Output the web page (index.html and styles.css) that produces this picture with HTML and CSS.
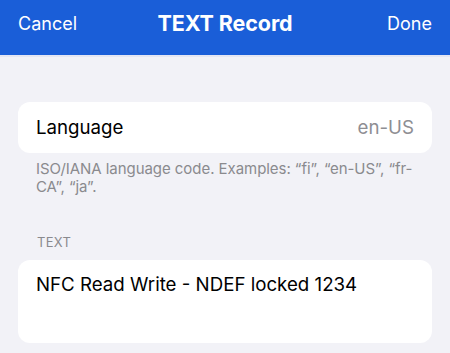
FILE: index.html
```html
<!DOCTYPE html>
<html>
<head>
<meta charset="utf-8">
<link rel="stylesheet" href="styles.css">
</head>
<body>
<div class="app">
  <header class="navbar">
    <span class="nav-btn left">Cancel</span>
    <span class="nav-title">TEXT Record</span>
    <span class="nav-btn right">Done</span>
  </header>
  <main class="content">
    <section class="group first">
      <div class="card row">
        <span class="label">Language</span>
        <span class="value">en-US</span>
      </div>
      <p class="footer">ISO/IANA language code. Examples: “fi”, “en-US”, “fr-CA”, “ja”.</p>
    </section>
    <section class="group">
      <div class="header">TEXT</div>
      <div class="card textarea">NFC Read Write - NDEF locked 1234</div>
    </section>
  </main>
</div>
</body>
</html>
```

FILE: styles.css
```css
* { box-sizing: border-box; }
html, body { margin: 0; padding: 0; }
body {
  width: 450px;
  height: 353px;
  overflow: hidden;
  background: #f2f2f7;
  font-family: Inter, "Noto Sans", "Liberation Sans", sans-serif;
  color: #000;
}
.navbar {
  background: #1a5ed8;
  color: #fff;
  display: grid;
  grid-template-columns: 1fr auto 1fr;
  align-items: center;
  padding: 0 18px 9px 18px;
  border-bottom: 2px solid #e4e6f3;
  height: 57px;
}
.nav-btn { font-size: 18px; }
.left { justify-self: start; }
.right { justify-self: end; }
.nav-title { font-size: 21.5px; font-weight: 700; letter-spacing: -0.1px; }
.content { padding: 45px 18px 0 18px; }
.card {
  background: #fff;
  border-radius: 12px;
}
.row {
  height: 51px;
  display: flex;
  align-items: center;
  justify-content: space-between;
  padding: 0 18px;
  font-size: 18.7px;
}
.value { color: #8e8e93; }
.footer {
  margin: 7px 0 0 0;
  padding: 0 18px;
  font-size: 15px;
  line-height: 18px;
  color: #8a8a8e;
  letter-spacing: -0.05px;
}
.group + .group { margin-top: 38px; }
.header {
  padding: 0 19px;
  font-size: 13px;
  color: #8a8a8e;
  text-transform: uppercase;
  margin-bottom: 10px;
  line-height: 16px;
  letter-spacing: 0.3px;
}
.textarea {
  height: 83px;
  padding: 13px 18px;
  font-size: 18.7px;
  line-height: 24px;
}
```
